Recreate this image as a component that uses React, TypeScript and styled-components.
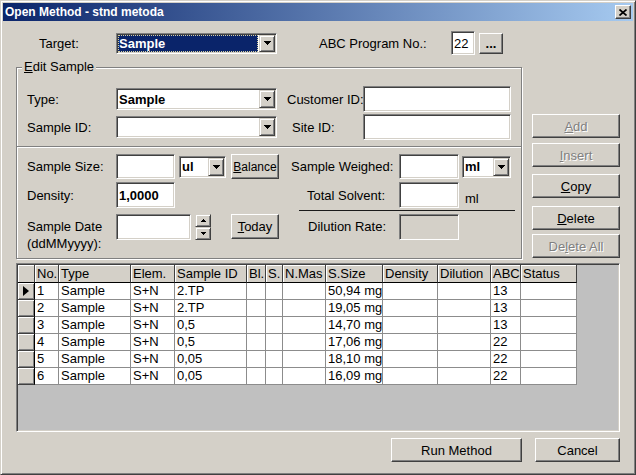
import React from "react"
import styled, { createGlobalStyle, css } from "styled-components"

const face = "#d4d0c8"
const shadow = "#808080"
const dark = "#404040"

const GlobalStyle = createGlobalStyle`
  html, body {
    margin: 0;
    padding: 0;
    background: ${face};
  }
  body {
    font-family: "Liberation Sans", Arial, sans-serif;
    font-size: 13px;
    color: #000;
  }
  * {
    box-sizing: border-box;
  }
`

const Window = styled.div`
  width: 636px;
  height: 475px;
  background: ${face};
  border: 1px solid;
  border-color: ${face} ${dark} ${dark} ${face};
  box-shadow: inset 1px 1px 0 #fff, inset -1px -1px 0 ${shadow};
  padding: 2px;
  display: flex;
  flex-direction: column;
`

const TitleBar = styled.div`
  height: 18px;
  flex: none;
  display: flex;
  align-items: center;
  justify-content: space-between;
  padding: 0 2px;
  background: linear-gradient(to right, #0a246a, #a6caf0);
`

const TitleText = styled.span`
  color: #fff;
  font-weight: bold;
  font-size: 12px;
  white-space: nowrap;
`

const raised = css`
  background: ${face};
  border: 1px solid;
  border-color: #fff ${dark} ${dark} #fff;
  box-shadow: inset -1px -1px 0 ${shadow};
`

const CloseButton = styled.div`
  ${raised};
  width: 16px;
  height: 14px;
  display: flex;
  align-items: center;
  justify-content: center;
`

const Body = styled.div`
  flex: 1;
  padding: 10px 13px 0 13px;
  display: flex;
  flex-direction: column;
`

const Row = styled.div<{ $h: number; $mt?: number }>`
  display: flex;
  align-items: center;
  height: ${p => p.$h}px;
  margin-top: ${p => p.$mt ?? 0}px;
  flex: none;
`

const Label = styled.div<{ $w: number; $indent?: number; $ml?: number }>`
  width: ${p => p.$w}px;
  padding-left: ${p => p.$indent ?? 0}px;
  margin-left: ${p => p.$ml ?? 0}px;
  flex: none;
  white-space: nowrap;
`

const TwoLineLabel = styled(Label)`
  align-self: flex-start;
  padding-top: 5px;
  line-height: 17px;
  white-space: normal;
`

const Sunken = styled.div<{ $w: number; $h: number; $ml?: number; $disabled?: boolean }>`
  width: ${p => p.$w}px;
  height: ${p => p.$h}px;
  margin-left: ${p => p.$ml ?? 0}px;
  flex: none;
  display: flex;
  align-items: center;
  padding: 1px;
  background: ${p => (p.$disabled ? face : "#fff")};
  border: 1px solid;
  border-color: ${shadow} #fff #fff ${shadow};
  box-shadow: inset 1px 1px 0 ${dark}, inset -1px -1px 0 ${face};
`

const FieldText = styled.span<{ $bold?: boolean }>`
  padding-left: 1px;
  font-weight: ${p => (p.$bold ? "bold" : "normal")};
  white-space: nowrap;
`

const ComboText = styled.div<{ $selected?: boolean }>`
  flex: 1;
  height: 100%;
  display: flex;
  align-items: center;
  padding-left: 1px;
  font-weight: bold;
  white-space: nowrap;
  overflow: hidden;
  ${p =>
    p.$selected &&
    css`
      background: #0a246a;
      color: #fff;
      outline: 1px dotted #d8d0a0;
      outline-offset: -1px;
      margin-right: 1px;
    `}
`

const DropButton = styled.div`
  background: ${face};
  border: 1px solid;
  border-color: ${face} ${dark} ${dark} ${face};
  box-shadow: inset 1px 1px 0 #fff, inset -1px -1px 0 ${shadow};
  width: 16px;
  height: 100%;
  flex: none;
  display: flex;
  align-items: center;
  justify-content: center;
`

const PushButton = styled.button<{ $w: number; $h: number; $mt?: number; $ml?: number; $small?: boolean }>`
  ${raised};
  width: ${p => p.$w}px;
  height: ${p => p.$h}px;
  margin: ${p => p.$mt ?? 0}px 0 0 ${p => p.$ml ?? 0}px;
  padding: 0;
  flex: none;
  font-family: "Liberation Sans", Arial, sans-serif;
  font-size: ${p => (p.$small ? 12 : 13)}px;
  color: #000;
  display: flex;
  align-items: center;
  justify-content: center;
  white-space: nowrap;
  &:disabled {
    color: ${shadow};
    text-shadow: 1px 1px 0 #fff;
  }
`

const Main = styled.div`
  display: flex;
  gap: 10px;
  margin-top: 12px;
`

const GroupBox = styled.div`
  position: relative;
  width: 506px;
  flex: none;
  padding: 18px 0 18px;
  border: 1px solid ${shadow};
  box-shadow: inset 1px 1px 0 #fff, 1px 1px 0 #fff;
`

const Legend = styled.div`
  position: absolute;
  top: -9px;
  left: 5px;
  padding: 0 2px;
  line-height: 15px;
  background: ${face};
`

const Section = styled.div`
  padding-left: 10px;
`

const Columns = styled.div`
  display: flex;
  margin-top: 6px;
  padding-left: 10px;
`

const Column = styled.div<{ $w: number; $ml?: number }>`
  width: ${p => p.$w}px;
  margin-left: ${p => p.$ml ?? 0}px;
  display: flex;
  flex-direction: column;
`

const EtchedLine = styled.div`
  height: 2px;
  margin-top: 6px;
  border-top: 1px solid ${shadow};
  border-bottom: 1px solid #fff;
`

const DarkRule = styled.div`
  height: 1px;
  width: 216px;
  margin: 2px 0 0 12px;
  background: #1a1a1a;
`

const Unit = styled.span`
  margin-left: 6px;
  align-self: flex-end;
  padding-bottom: 2px;
`

const Spin = styled.div`
  width: 16px;
  height: 26px;
  margin-left: 4px;
  flex: none;
  display: flex;
  flex-direction: column;
`

const SpinHalf = styled(DropButton)`
  width: 16px;
  height: 13px;
`

const ButtonColumn = styled.div`
  display: flex;
  flex-direction: column;
  margin-top: 47px;
`

const GridFrame = styled.div`
  margin-top: 4px;
  height: 169px;
  flex: none;
  padding: 1px;
  background: #c0c0c0;
  border: 1px solid;
  border-color: ${shadow} #fff #fff ${shadow};
  box-shadow: inset 1px 1px 0 ${dark}, inset -1px -1px 0 ${face};
`

const cols = [17, 24, 72, 44, 72, 19, 17, 43, 57, 55, 53, 30, 56]

const GridRow = styled.div<{ $h: number }>`
  display: grid;
  grid-template-columns: ${cols.map(c => `${c}px`).join(" ")};
  height: ${p => p.$h}px;
`

const HeadCell = styled.div`
  background: ${face};
  border-right: 1px solid ${dark};
  border-bottom: 1px solid #000;
  box-shadow: inset 1px 1px 0 #fff;
  padding-left: 2px;
  line-height: 17px;
  white-space: nowrap;
  overflow: hidden;
`

const Indicator = styled.div`
  background: ${face};
  border-right: 1px solid #000;
  border-bottom: 1px solid ${dark};
  box-shadow: inset 1px 1px 0 #fff, inset -1px -1px 0 ${shadow};
  display: flex;
  align-items: center;
  justify-content: center;
`

const Cell = styled.div`
  background: #fff;
  border-right: 1px solid #8c8c8c;
  border-bottom: 1px solid #8c8c8c;
  padding-left: 2px;
  line-height: 16px;
  white-space: nowrap;
  overflow: hidden;
`

const Footer = styled.div`
  display: flex;
  justify-content: flex-end;
  gap: 13px;
  margin-top: 6px;
`

const Arrow = ({ down = true }: { down?: boolean }) => (
  <svg width="7" height="4" viewBox="0 0 7 4" shapeRendering="crispEdges">
    <polygon points={down ? "0,0 7,0 3.5,4" : "0,4 7,4 3.5,0"} fill="#000" />
  </svg>
)

const SmallArrow = ({ down }: { down?: boolean }) => (
  <svg width="5" height="3" viewBox="0 0 5 3" shapeRendering="crispEdges">
    <polygon points={down ? "0,0 5,0 2.5,3" : "0,3 5,3 2.5,0"} fill="#000" />
  </svg>
)

const Combo = ({
  w,
  h,
  ml,
  value,
  selected,
}: {
  w: number
  h: number
  ml?: number
  value?: string
  selected?: boolean
}) => (
  <Sunken $w={w} $h={h} $ml={ml}>
    <ComboText $selected={selected}>{value}</ComboText>
    <DropButton>
      <Arrow />
    </DropButton>
  </Sunken>
)

const headers = ["", "No.", "Type", "Elem.", "Sample ID", "Bl.", "S.", "N.Mas", "S.Size", "Density", "Dilution", "ABC", "Status"]

const samples = [
  ["1", "Sample", "S+N", "2.TP", "50,94 mg", "13"],
  ["2", "Sample", "S+N", "2.TP", "19,05 mg", "13"],
  ["3", "Sample", "S+N", "0,5", "14,70 mg", "13"],
  ["4", "Sample", "S+N", "0,5", "17,06 mg", "22"],
  ["5", "Sample", "S+N", "0,05", "18,10 mg", "22"],
  ["6", "Sample", "S+N", "0,05", "16,09 mg", "22"],
]

export default function App() {
  return (
    <>
      <GlobalStyle />
      <Window>
        <TitleBar>
          <TitleText>Open Method - stnd metoda</TitleText>
          <CloseButton>
            <svg width="8" height="7" viewBox="0 0 8 7">
              <path d="M0.5 0.5 L7.5 6.5 M7.5 0.5 L0.5 6.5" stroke="#000" strokeWidth="1.7" />
            </svg>
          </CloseButton>
        </TitleBar>

        <Body>
          <Row $h={24}>
            <Label $w={77} $ml={23}>Target:</Label>
            <Combo w={161} h={21} value="Sample" selected />
            <Label $w={132} $ml={42}>ABC Program No.:</Label>
            <Sunken $w={24} $h={24}>
              <FieldText>22</FieldText>
            </Sunken>
            <PushButton $w={24} $h={21} $ml={4}>
              <b>...</b>
            </PushButton>
          </Row>

          <Main>
            <GroupBox>
              <Legend>
                <u>E</u>dit Sample
              </Legend>
              <Section>
                <Row $h={26}>
                  <Label $w={89}>Type:</Label>
                  <Combo w={161} h={22} value="Sample" />
                  <Label $w={76} $ml={10}>Customer ID:</Label>
                  <Sunken $w={148} $h={26} />
                </Row>
                <Row $h={26} $mt={2}>
                  <Label $w={89}>Sample ID:</Label>
                  <Combo w={161} h={22} />
                  <Label $w={76} $ml={10} $indent={5}>Site ID:</Label>
                  <Sunken $w={148} $h={26} />
                </Row>
              </Section>

              <EtchedLine />

              <Columns>
                <Column $w={252}>
                  <Row $h={25}>
                    <Label $w={89}>Sample Size:</Label>
                    <Sunken $w={59} $h={25} />
                    <Combo w={47} h={22} ml={4} value="ul" />
                    <PushButton $w={48} $h={25} $ml={5} $small>
                      <span>
                        <u>B</u>alance
                      </span>
                    </PushButton>
                  </Row>
                  <Row $h={26} $mt={3}>
                    <Label $w={89}>Density:</Label>
                    <Sunken $w={59} $h={26}>
                      <FieldText $bold>1,0000</FieldText>
                    </Sunken>
                  </Row>
                  <Row $h={27} $mt={5}>
                    <TwoLineLabel $w={89}>
                      Sample Date
                      <br />
                      (ddMMyyyy):
                    </TwoLineLabel>
                    <Sunken $w={75} $h={26} />
                    <Spin>
                      <SpinHalf>
                        <SmallArrow />
                      </SpinHalf>
                      <SpinHalf>
                        <SmallArrow down />
                      </SpinHalf>
                    </Spin>
                    <PushButton $w={48} $h={25} $ml={20}>
                      <span>
                        <u>T</u>oday
                      </span>
                    </PushButton>
                  </Row>
                </Column>

                <Column $w={228} $ml={8}>
                  <Row $h={25}>
                    <Label $w={112} $indent={4}>Sample Weighed:</Label>
                    <Sunken $w={60} $h={25} />
                    <Combo w={49} h={22} ml={3} value="ml" />
                  </Row>
                  <Row $h={26} $mt={3}>
                    <Label $w={112} $indent={20}>Total Solvent:</Label>
                    <Sunken $w={60} $h={26} />
                    <Unit>ml</Unit>
                  </Row>
                  <DarkRule />
                  <Row $h={27} $mt={2}>
                    <Label $w={112} $indent={21}>Dilution Rate:</Label>
                    <Sunken $w={60} $h={26} $disabled />
                  </Row>
                </Column>
              </Columns>
            </GroupBox>

            <ButtonColumn>
              <PushButton $w={88} $h={24} disabled>
                <span>
                  <u>A</u>dd
                </span>
              </PushButton>
              <PushButton $w={88} $h={24} $mt={5} disabled>
                <span>
                  <u>I</u>nsert
                </span>
              </PushButton>
              <PushButton $w={88} $h={24} $mt={7}>
                <span>
                  <u>C</u>opy
                </span>
              </PushButton>
              <PushButton $w={88} $h={24} $mt={8}>
                <span>
                  <u>D</u>elete
                </span>
              </PushButton>
              <PushButton $w={88} $h={24} $mt={4} disabled>
                <span>
                  De<u>l</u>ete All
                </span>
              </PushButton>
            </ButtonColumn>
          </Main>

          <GridFrame>
            <GridRow $h={18}>
              {headers.map((h, i) => (
                <HeadCell key={i}>{h}</HeadCell>
              ))}
            </GridRow>
            {samples.map((s, i) => {
              const cells = [s[0], s[1], s[2], s[3], "", "", "", s[4], "", "", s[5], ""]
              return (
                <GridRow $h={17} key={s[0]}>
                  <Indicator>
                    {i === 0 && (
                      <svg width="6" height="10" viewBox="0 0 6 10">
                        <polygon points="0,0 6,5 0,10" fill="#000" />
                      </svg>
                    )}
                  </Indicator>
                  {cells.map((c, j) => (
                    <Cell key={j}>{c}</Cell>
                  ))}
                </GridRow>
              )
            })}
          </GridFrame>

          <Footer>
            <PushButton $w={131} $h={24}>Run Method</PushButton>
            <PushButton $w={85} $h={24}>Cancel</PushButton>
          </Footer>
        </Body>
      </Window>
    </>
  )
}
